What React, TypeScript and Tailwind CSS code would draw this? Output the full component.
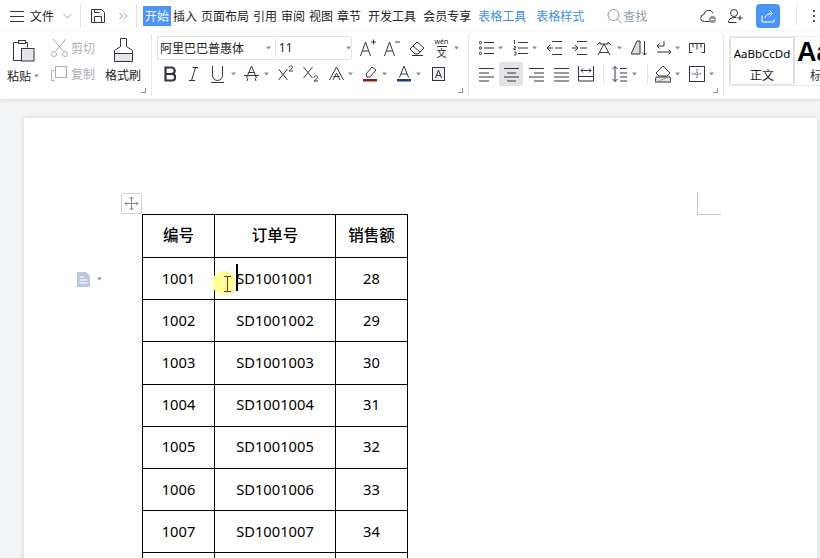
import React from "react";

const tabs = [
  { label: "插入", cls: "ml-[2px] text-[#222]" },
  { label: "页面布局", cls: "ml-[4px] text-[#222]" },
  { label: "引用", cls: "ml-[4px] text-[#222]" },
  { label: "审阅", cls: "ml-[4px] text-[#222]" },
  { label: "视图", cls: "ml-[4px] text-[#222]" },
  { label: "章节", cls: "ml-[4px] text-[#222]" },
  { label: "开发工具", cls: "ml-[7px] text-[#222]" },
  { label: "会员专享", cls: "ml-[7px] text-[#222]" },
  { label: "表格工具", cls: "ml-[7px] text-[#3d8fe8]" },
  { label: "表格样式", cls: "ml-[10px] text-[#3d8fe8]" },
];

const rows = [
  ["1001", "SD1001001", "28"],
  ["1002", "SD1001002", "29"],
  ["1003", "SD1001003", "30"],
  ["1004", "SD1001004", "31"],
  ["1005", "SD1001005", "32"],
  ["1006", "SD1001006", "33"],
  ["1007", "SD1001007", "34"],
  ["", "", ""],
];

interface IconProps {
  w: number;
  h?: number;
  className?: string;
  children: React.ReactNode;
}

// every ribbon icon is a small pixel-box svg, y=10 is the row's middle
const Ic: React.FC<IconProps> = ({ w, h = 20, className = "", children }) => (
  <svg
    width={w}
    height={h}
    viewBox={`0 0 ${w} ${h}`}
    fill="none"
    stroke="currentColor"
    strokeWidth={1}
    className={`shrink-0 text-[#2f3541] ${className}`}
  >
    {children}
  </svg>
);

const Caret: React.FC<{ className?: string }> = ({ className = "" }) => (
  <svg width={5} height={20} viewBox="0 0 5 20" className={`shrink-0 ${className}`}>
    <path d="M0 8.5h5L2.5 11.5z" fill="#8b8f98" />
  </svg>
);

const Lines: React.FC<{ d: string }> = ({ d }) => <path d={d} />;

export default function App() {
  return (
    <div className="w-[820px] h-[558px] overflow-hidden flex flex-col bg-[#f3f4f6] font-['Noto_Sans_CJK_SC','Noto_Sans',sans-serif]">
      {/* title row */}
      <div className="h-[33px] shrink-0 bg-white flex items-center pb-px text-[12px] leading-[20px] relative -mb-px">
        <Ic w={14} className="ml-[10px]">
          <Lines d="M0 5.5h14M0 10.5h14M0 15.5h14" />
        </Ic>
        <span className="ml-[6px] text-[#222]">文件</span>
        <Ic w={9} className="ml-[9px] text-[#9a9ea6]">
          <path d="M.5 8l4 4 4-4" />
        </Ic>
        <div className="ml-[8px] w-px h-[24px] bg-[#e3e4e6]" />
        <Ic w={16} className="ml-[9px]">
          <path d="M1.5 3.5h10l3 3v10h-13z" />
          <path d="M4.5 16.5v-6h7v6M4.5 3.5v3h5" />
        </Ic>
        <Ic w={9} className="ml-[13px] text-[#9a9ea6]">
          <path d="M.5 7l3 3-3 3M5 7l3 3-3 3" />
        </Ic>
        <div className="ml-[8px] w-px h-[24px] bg-[#e3e4e6]" />
        <span className="ml-[6px] w-[28px] h-[20px] bg-[#4b94f5] text-white text-center">开始</span>
        {tabs.map((t) => (
          <span key={t.label} className={t.cls}>
            {t.label}
          </span>
        ))}
        <Ic w={15} className="ml-[23px] text-[#8f959e]">
          <circle cx="6.5" cy="9" r="5.5" />
          <path d="M10.5 13l4 4" />
        </Ic>
        <span className="ml-px text-[#8b9bb2]">查找</span>
        <Ic w={16} className="ml-[53px]">
          <path d="M11 15.5H4.5a3.5 3.5 0 0 1-.6-7A4.8 4.8 0 0 1 13 7" />
          <circle cx="12.5" cy="13.5" r="3.5" fill="#8f949c" stroke="none" />
          <path d="M10.5 13.5h4" stroke="#fff" />
        </Ic>
        <Ic w={15} className="ml-[12px]">
          <circle cx="6" cy="7" r="3.5" />
          <path d="M.5 16.5c0-3.5 2.5-5 5.5-5h2.500M.5 16.5h8M12 9.500v5M9.500 12h5" />
        </Ic>
        <div className="ml-[13px] w-[24px] h-[24px] rounded-[4px] bg-[#4b94f5] flex items-center justify-center">
          <Ic w={14} h={14} className="text-white">
            <path d="M1 6.500v6.500h12v-3M4 9c.5-3 3-4.500 6.500-4.500M8.500 1.500l3 3-3 3" />
          </Ic>
        </div>
        <div className="ml-[16px] w-px h-[22px] bg-[#e3e4e6]" />
        <div className="ml-[16px] flex flex-col gap-[3px]">
          <div className="w-[2px] h-[2px] bg-[#555]" />
          <div className="w-[2px] h-[2px] bg-[#555]" />
          <div className="w-[2px] h-[2px] bg-[#555]" />
        </div>
      </div>

      {/* ribbon */}
      <div className="h-[67px] shrink-0 bg-white flex pt-[2px] shadow-[0_1px_3px_rgba(0,0,0,0.12)] relative text-[#222]">
        {/* clipboard group */}
        <div className="w-[151px] h-[62px] shrink-0 flex relative text-[12px]">
          <div className="w-[46px] shrink-0 flex flex-col">
            <Ic w={22} h={24} className="ml-[13px] mt-[5px]">
              <path d="M12 3.500h2.500v5M8 21.500H.5V3.500H5" />
              <rect x="5.500" y="1.500" width="7" height="3" fill="#fff" />
              <rect x="8.500" y="9.500" width="12.500" height="12.500" fill="#e3e5e8" />
            </Ic>
            <div className="flex items-center ml-[7px] mt-[4px] h-[18px]">
              <span>粘贴</span>
              <Caret className="ml-[3px]" />
            </div>
          </div>
          <div className="w-[59px] shrink-0 flex flex-col pt-[2px] text-[#a9adb5]">
            <div className="flex items-center h-[24px] ml-[5px]">
              <Ic w={17} className="text-[#a9adb5]">
                <path d="M2 1l10.500 12.500M15 1L4.500 13.500" />
                <circle cx="3" cy="16" r="2.500" />
                <circle cx="14" cy="16" r="2.500" />
              </Ic>
              <span className="ml-[3px]">剪切</span>
            </div>
            <div className="flex items-center h-[24px] mt-[2px] ml-[5px]">
              <Ic w={17} className="text-[#a9adb5]">
                <path d="M3.500 16.500H.5V6.500h3" />
                <rect x="4.500" y="2.500" width="11" height="11" />
              </Ic>
              <span className="ml-[3px]">复制</span>
            </div>
          </div>
          <div className="flex flex-col">
            <Ic w={21} h={25} className="ml-[8px] mt-[4px]">
              <path d="M7.500 .5h6v8l6 4v11H1.500v-11l6-4z" />
              <path d="M2 16h17v7H2z" fill="#e3e5e8" stroke="none" />
              <path d="M1.500 15.500h18" />
            </Ic>
            <span className="mt-[3px] h-[18px] leading-[18px]">格式刷</span>
          </div>
          <div className="absolute right-[5px] bottom-[3px] w-[5px] h-[5px] border-r border-b border-[#8b8f98]" />
        </div>
        <div className="w-px h-[62px] bg-[#e6e7e9] shrink-0" />

        {/* font group */}
        <div className="w-[316px] h-[62px] shrink-0 flex flex-col relative">
          <div className="flex items-center h-[24px] mt-[2px]">
            <div className="ml-[5px] w-[195px] h-[24px] border border-[#e3e4e6] rounded-[2px] flex items-center text-[12px] shrink-0">
              <span className="ml-[2px] w-[104px] whitespace-nowrap">阿里巴巴普惠体</span>
              <Caret className="ml-[3px]" />
              <div className="ml-[4px] w-px h-[22px] bg-[#e3e4e6]" />
              <span className="ml-[3px] w-[66px] font-['Noto_Sans',sans-serif]">11</span>
              <Caret className="ml-[2px]" />
            </div>
            <Ic w={16} className="ml-[8px]">
              <path d="M.5 18L5.500 4l5 14M2.500 13h6M11 4h5M13.500 1.500v5" />
            </Ic>
            <Ic w={16} className="ml-[8px]">
              <path d="M.5 18L5.500 4l5 14M2.500 13h6M11 4h5" />
            </Ic>
            <Ic w={16} className="ml-[9px]">
              <path d="M1 11l7-7 7 6-6 6H6z" />
              <path d="M4 8l7 6M3 17.500h11" />
            </Ic>
            <div className="ml-[9px] w-[15px] h-[20px] shrink-0 flex flex-col items-center">
              <span className="text-[7px] leading-[8px] font-['Noto_Sans',sans-serif]">wén</span>
              <span className="text-[10px] leading-[11px] border-t border-[#2f3541]">文</span>
            </div>
            <Caret className="ml-[5px]" />
          </div>
          <div className="flex items-center h-[24px] mt-[2px]">
            <Ic w={12} className="ml-[12px]">
              <path d="M1.500 3.500h6a3 3 0 0 1 0 6.500h-6zM1.500 10h7a3.300 3.300 0 0 1 0 6.500h-7z" strokeWidth={2.200} />
            </Ic>
            <Ic w={9} className="ml-[13px]">
              <path d="M6.500 3.500L2.500 16.500M3.500 3.500h6M0 16.500h6" />
            </Ic>
            <Ic w={13} className="ml-[13px]">
              <path d="M1.500 2v9.500a5 5 0 0 0 10 0V2M0 18.500h13" />
            </Ic>
            <Caret className="ml-[7px]" />
            <Ic w={15} className="ml-[8px]">
              <path d="M2.500 14L7.500 2l5 12M4.500 8.500h6M0 11.500h15" />
              <path d="M3 17l1-3M11 14l1 3" />
            </Ic>
            <Caret className="ml-[5px]" />
            <Ic w={16} className="ml-[9px]">
              <path d="M.5 5l9 11M9.500 5l-9 11M11 3.500c.5-2.500 4-2 3.500 0S11 6 11 7h4" />
            </Ic>
            <Ic w={16} className="ml-[9px]">
              <path d="M.5 3l9 11M9.500 3l-9 11M11 13.500c.5-2.500 4-2 3.500 0S11 16 11 17h4" />
            </Ic>
            <Ic w={15} className="ml-[10px]">
              <path d="M.5 16L7.500 3l7 13M4 16l3.500-7 3.500 7M4.500 12.500h6" />
            </Ic>
            <Caret className="ml-[4px]" />
            <Ic w={14} className="ml-[10px]">
              <path d="M3 10l6-7 4 3-6 7H4z" />
              <path d="M0 15h14v2.500H0z" fill="#8a1c12" stroke="none" />
            </Ic>
            <Caret className="ml-[5px]" />
            <Ic w={14} className="ml-[10px]">
              <path d="M2.500 13.500L7 2l4.500 11.500M4 10h6" />
              <path d="M0 15h14v2.500H0z" fill="#173a8a" stroke="none" />
            </Ic>
            <Caret className="ml-[5px]" />
            <Ic w={13} className="ml-[11px]">
              <rect x=".5" y="3.500" width="12" height="13" fill="#eceef0" />
              <path d="M3.500 14L6.500 6l3 8M4.500 11.500h4" />
            </Ic>
          </div>
          <div className="absolute right-[5px] bottom-[3px] w-[5px] h-[5px] border-r border-b border-[#8b8f98]" />
        </div>
        <div className="w-px h-[62px] bg-[#e6e7e9] shrink-0" />

        {/* paragraph group */}
        <div className="w-[254px] h-[62px] shrink-0 flex flex-col relative">
          <div className="flex items-center h-[24px] mt-[2px]">
            <Ic w={15} className="ml-[10px]">
              <path d="M5 4.500h10M5 10h10M5 15.500h10" />
              <circle cx="1.500" cy="4.500" r="1.200" />
              <circle cx="1.500" cy="10" r="1.200" />
              <circle cx="1.500" cy="15.500" r="1.200" />
            </Ic>
            <Caret className="ml-[4px]" />
            <Ic w={15} className="ml-[10px]">
              <path d="M5 4.500h10M5 10h10M5 15.500h10" />
              <path d="M1.500 2v4M1 8.500h1.500v1.500H1V11.500h2M1 14h2v3H1" strokeWidth={0.9} />
            </Ic>
            <Caret className="ml-[4px]" />
            <Ic w={15} className="ml-[10px]">
              <path d="M5 3.500h10M8 10h7M5 16.500h10M0 10h6M3 7l-3 3 3 3" />
            </Ic>
            <Ic w={15} className="ml-[10px]">
              <path d="M5 3.500h10M8 10h7M5 16.500h10M0 10h6M3 7l3 3-3 3" />
            </Ic>
            <Ic w={16} className="ml-[9px]">
              <path d="M1 7l3-3v2h8V4l3 3M1 7l3-3M2 17L8 6l6 11M4 14.500h8" />
            </Ic>
            <Caret className="ml-[5px]" />
            <Ic w={16} className="ml-[9px]">
              <path d="M0 16L6 3h3v13z" fill="#d9dbde" />
              <path d="M13.500 3v14M11 14.500l2.500 2.500 2.500-2.500" />
            </Ic>
            <Ic w={16} className="ml-[9px]">
              <path d="M8 3v5H1M3.500 5.500L1 8l2.500 2.500M1 14h14M12.500 11.500L15 14l-2.500 2.500" />
            </Ic>
            <Caret className="ml-[3px]" />
            <Ic w={16} className="ml-[9px]">
              <path d="M.5 15V5.500h15V15M.5 14.500h3M12.500 14.500h3M4 5.500v4M8 5.500v6M12 5.500v4" />
            </Ic>
          </div>
          <div className="flex items-center h-[24px] mt-[2px]">
            <Ic w={15} className="ml-[10px]">
              <path d="M0 4.500h15M0 9h10M0 13h15M0 17h10" />
            </Ic>
            <div className="ml-[5px] w-[24px] h-[24px] rounded-[2px] bg-[#e1e3e6] flex items-center justify-center shrink-0">
              <Ic w={15}>
                <path d="M0 4.500h15M3 9h9M0 13h15M3 17h9" />
              </Ic>
            </div>
            <Ic w={15} className="ml-[6px]">
              <path d="M0 4.500h15M5 9h10M0 13h15M5 17h10" />
            </Ic>
            <Ic w={15} className="ml-[10px]">
              <path d="M0 4.500h15M0 9h15M0 13h15M0 17h15" />
            </Ic>
            <Ic w={16} className="ml-[9px]">
              <path d="M.5 2v15M15.500 2v15M.5 17h15M.5 12.500h15M3 6.500h10M5 4.500l-2 2 2 2M11 4.500l2 2-2 2" />
            </Ic>
            <div className="ml-[9px] w-px h-[20px] bg-[#e3e4e6]" />
            <Ic w={15} className="ml-[8px]">
              <path d="M3 2.500v15M.5 5L3 2.500 5.500 5M.5 15L3 17.500 5.500 15M8 4.500h7M8 9h7M8 13h7M8 17h7" />
            </Ic>
            <Caret className="ml-[5px]" />
            <div className="ml-[10px] w-px h-[20px] bg-[#e3e4e6]" />
            <Ic w={16} className="ml-[7px]">
              <path d="M1 9l7-7 7 7-3 3H4z" />
              <path d="M1 13h14l1 5H0z" fill="#e3e5e8" />
              <path d="M4 17l7-3" stroke="#e8923a" />
            </Ic>
            <Caret className="ml-[4px]" />
            <Ic w={16} className="ml-[9px]">
              <rect x=".5" y="2.500" width="15" height="15" />
              <path d="M8 5v10M3 10h10" strokeDasharray="1.500 1" />
            </Ic>
            <Caret className="ml-[4px]" />
          </div>
          <div className="absolute right-[5px] bottom-[3px] w-[5px] h-[5px] border-r border-b border-[#8b8f98]" />
        </div>
        <div className="w-px h-[62px] bg-[#e6e7e9] shrink-0" />

        {/* styles */}
        <div className="ml-[5px] mt-[2px] h-[50px] flex-1 flex overflow-hidden border-y border-[#e8e9eb] rounded-l-[2px]">
          <div className="w-[66px] shrink-0 border-2 border-[#dfe1e4] flex flex-col items-center rounded-[2px] -my-px">
            <span className="mt-[7px] text-[11.5px] leading-[18px] whitespace-nowrap text-black font-['Noto_Sans',sans-serif]">AaBbCcDd</span>
            <span className="mt-[3px] text-[12px] leading-[18px]">正文</span>
          </div>
          <div className="w-[25px] shrink-0 flex flex-col pl-[2px] overflow-hidden">
            <span className="text-[27px] leading-[28px] mt-px font-bold text-black font-['Liberation_Sans',sans-serif]">Aa</span>
            <span className="text-[12px] leading-[18px] ml-[13px] text-[#333]">标</span>
          </div>
        </div>
      </div>

      {/* document */}
      <div className="flex-1 min-h-0 pt-[19px] pl-[24px] pr-[3px]">
        <div className="relative h-[600px] bg-white shadow-[0_0_6px_rgba(0,0,0,0.14)] pt-[96px] pl-[118px]">
          <table className="table-fixed border-collapse w-[265px] text-[14.7px] text-black font-['Noto_Sans','Noto_Sans_CJK_SC',sans-serif]">
            <colgroup>
              <col className="w-[72px]" />
              <col className="w-[121px]" />
              <col className="w-[72px]" />
            </colgroup>
            <tbody>
              <tr className="h-[43px] font-medium text-[15.5px]">
                <td className="border border-black text-center p-0">编号</td>
                <td className="border border-black text-center p-0">订单号</td>
                <td className="border border-black text-center p-0">销售额</td>
              </tr>
              {rows.map((r, i) => (
                <tr key={i} className="h-[42.2px]">
                  <td className="border border-black text-center p-0 pb-[2px]">{r[0]}</td>
                  <td className="border border-black text-center p-0 pb-[2px]">{r[1]}</td>
                  <td className="border border-black text-center p-0 pb-[2px]">{r[2]}</td>
                </tr>
              ))}
            </tbody>
          </table>

          {/* table move handle */}
          <div className="absolute left-[97px] top-[75px] w-[21px] h-[21px] border border-[#cfd0d2] rounded-[2px] bg-white flex items-center justify-center">
            <Ic w={15} h={15} className="text-[#85868a]">
              <path d="M7.500 1v13M1 7.500h13M5.500 3l2-2 2 2M5.500 12l2 2 2-2M3 5.500l-2 2 2 2M12 5.500l2 2-2 2" />
            </Ic>
          </div>
          {/* page margin corner */}
          <div className="absolute left-[673px] top-[74px] w-[24px] h-[23px] border-l border-b border-[#c8c8c8]" />
          {/* paragraph marker */}
          <div className="absolute left-[53px] top-[151px] flex items-center">
            <Ic w={13} h={15} className="text-white">
              <path d="M0 0h9l4 4v11H0z" fill="#b9c7e1" stroke="none" />
              <path d="M2.500 5h5M2.500 8h8M2.500 11h8" />
            </Ic>
            <Caret className="ml-[7px]" />
          </div>
          {/* mouse highlight and caret */}
          <div className="absolute left-[188px] top-[153px] w-[24px] h-[24px] rounded-full bg-[#ffff99]" />
          <Ic w={7} h={16} className="absolute left-[200px] top-[158px] text-[#8a2a1a]">
            <path d="M0 .5h7M3.500 .5v15M0 15.500h7" />
          </Ic>
          <div className="absolute left-[212px] top-[146px] w-[2px] h-[27px] bg-black" />
        </div>
      </div>
    </div>
  );
}
